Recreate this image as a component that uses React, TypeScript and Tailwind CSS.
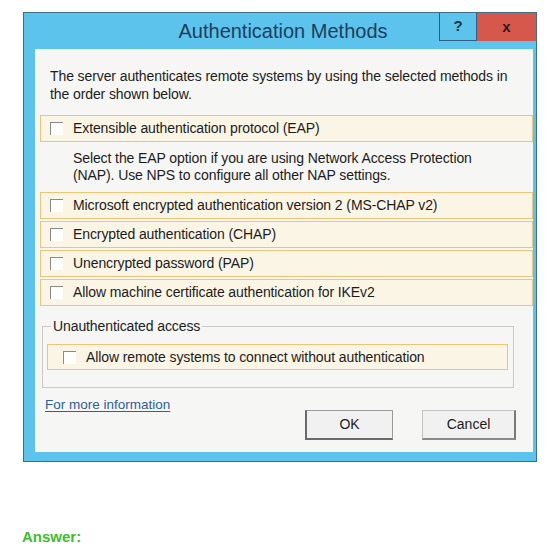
import React from "react";

const CheckRow = ({ label, className = "" }: { label: string; className?: string }) => (
  <div
    className={`flex items-center h-[27px] border border-[#efc574] bg-[#fbf5e6] ${className}`}
  >
    <span className="ml-[9px] w-[13px] h-[13px] border-t border-l border-[#8a8a8a] bg-white shrink-0" />
    <span className="ml-[10px] text-[14px] tracking-[-0.1px] text-[#1c1c1c]">{label}</span>
  </div>
);

export default function App() {
  return (
    <div
      className="w-[548px] h-[547px] bg-white relative"
      style={{ fontFamily: '"Liberation Sans", Arial, sans-serif' }}
    >
      <div className="pt-[12px] pl-[23px]">
        {/* Dialog window */}
        <div className="w-[514px] h-[450px] bg-[#5cc4ec] border border-[#3c6f8a] flex flex-col">
          {/* Title bar */}
          <div className="h-[36px] flex items-start relative">
            <div className="flex-1 h-full flex items-center justify-center pl-[6px] text-[20px] text-[#1d3d5c]">
              Authentication Methods
            </div>
            <div className="absolute right-0 top-0 flex">
              <div className="w-[38px] h-[28px] border border-t-0 border-[#2f5f80] bg-[#5cc4ec] flex items-center justify-center text-[15px] font-bold text-[#1b2f45]">
                ?
              </div>
              <div className="w-[59px] h-[28px] bg-[#d6574c] flex items-center justify-center text-[15px] font-bold text-[#2a1a1a]">
                x
              </div>
            </div>
          </div>

          {/* Client area */}
          <div className="ml-[11px] mr-[3px] h-[403px] bg-[#f6f6f5] flex flex-col">
            <p className="pt-[18px] pl-[15px] pr-[6px] text-[14px] tracking-[-0.1px] leading-[18px] text-[#1c1c1c]">
              The server authenticates remote systems by using the selected methods in
              <br />
              the order shown below.
            </p>

            <CheckRow label="Extensible authentication protocol (EAP)" className="mt-[12px] ml-[5px]" />

            <p className="mt-[8px] pl-[38px] text-[14px] tracking-[-0.1px] leading-[17px] text-[#1c1c1c]">
              Select the EAP option if you are using Network Access Protection
              <br />
              (NAP). Use NPS to configure all other NAP settings.
            </p>

            <div className="mt-[8px] ml-[5px] flex flex-col gap-[2px]">
              <CheckRow label="Microsoft encrypted authentication version 2 (MS-CHAP v2)" />
              <CheckRow label="Encrypted authentication (CHAP)" />
              <CheckRow label="Unencrypted password (PAP)" />
              <CheckRow label="Allow machine certificate authentication for IKEv2" />
            </div>

            {/* Group box */}
            <div className="relative mt-[20px] ml-[7px] w-[472px] h-[62px] border border-[#c9c9c9]">
              <span className="absolute -top-[9px] left-[8px] px-[2px] bg-[#f6f6f5] text-[14px] tracking-[-0.1px] leading-[16px] text-[#1c1c1c]">
                Unauthenticated access
              </span>
              <div className="mt-[17px] ml-[4px] mr-[5px] flex items-center h-[26px] border border-[#efc574] bg-[#fbf5e6]">
                <span className="ml-[15px] w-[13px] h-[13px] border-t border-l border-[#8a8a8a] bg-white shrink-0" />
                <span className="ml-[10px] text-[14px] tracking-[-0.1px] text-[#1c1c1c]">
                  Allow remote systems to connect without authentication
                </span>
              </div>
            </div>

            <div className="flex items-start">
              <a className="mt-[7px] ml-[10px] text-[13.5px] text-[#2e5f9e] underline underline-offset-2 cursor-pointer">
                For more information
              </a>
              <div className="ml-auto mr-[17px] mt-[22px] flex gap-[29px]">
                <button className="w-[88px] h-[30px] bg-[#f1f1f1] border border-[#9a9a9a] border-l-2 border-l-[#6a6a6a] border-b-2 border-b-[#6a6a6a] text-[14px] text-[#1c1c1c]">
                  OK
                </button>
                <button className="w-[94px] h-[30px] bg-[#f1f1f1] border border-[#c4c4c4] border-r-2 border-r-[#7a7a7a] border-b-2 border-b-[#8a8a8a] text-[14px] text-[#1c1c1c]">
                  Cancel
                </button>
              </div>
            </div>
          </div>
        </div>
      </div>

      <div className="absolute left-[22px] top-[526px] text-[15px] font-bold text-[#3cbf2a]">
        Answer:
      </div>
    </div>
  );
}
